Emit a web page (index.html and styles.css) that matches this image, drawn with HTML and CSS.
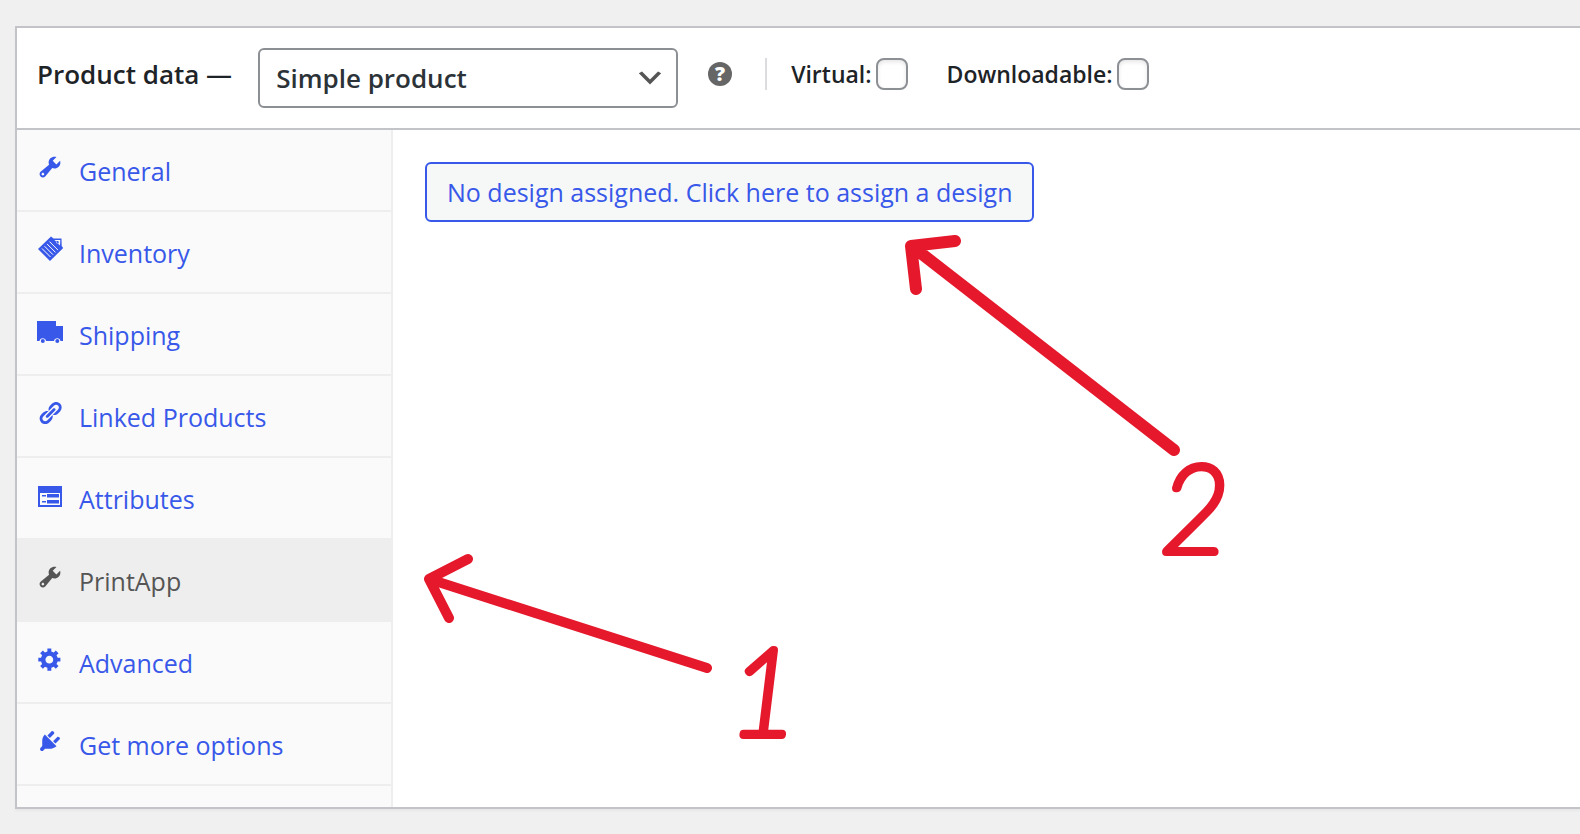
FILE: index.html
```html
<!DOCTYPE html>
<html lang="en">
<head>
<meta charset="utf-8">
<title>Product data</title>
<link rel="stylesheet" href="styles.css">
</head>
<body>
<section class="panel">
  <header class="panel-header">
    <h2 class="panel-title"><label for="product-type">Product data —</label></h2>
    <div class="select-wrap">
      <select class="type-select" id="product-type">
        <option>Simple product</option>
        <option>Grouped product</option>
        <option>Variable product</option>
      </select>
      <svg class="select-arrow" viewBox="0 0 20 20" aria-hidden="true"><path d="M5 6l5 5 5-5 2 1-7 7-7-7 2-1z"/></svg>
    </div>
    <div class="type-options">
      <button class="help" type="button" aria-label="Help">?</button>
      <span class="divider"></span>
      <label class="check" for="virtual">Virtual: <input class="check-box" type="checkbox" id="virtual"></label>
      <label class="check" for="downloadable">Downloadable: <input class="check-box" type="checkbox" id="downloadable"></label>
    </div>
  </header>
  <div class="panel-body">
    <nav class="tabs">
      <a class="tab" href="#general"><svg class="icon" viewBox="0 0 20 20"><path d="M16.68 9.77c-1.34 1.34-3.3 1.67-4.95.99l-5.41 6.52c-.99.99-2.59.99-3.58 0s-.99-2.59 0-3.57l6.52-5.42c-.68-1.65-.35-3.61.99-4.95 1.28-1.28 3.12-1.62 4.72-1.06l-2.89 2.89 2.82 2.82 2.86-2.87c.53 1.58.18 3.39-1.08 4.65zM3.81 16.21c.4.39 1.04.39 1.43 0 .4-.4.4-1.04 0-1.43-.39-.4-1.03-.4-1.43 0-.39.39-.39 1.03 0 1.43z"/></svg>General</a>
      <a class="tab" href="#inventory"><svg class="icon" viewBox="0 0 26 26"><path fill-rule="evenodd" d="M1 13L14 .5l2.500 1.900 8 .1.200 7.500 1.500 2L13 25zM17.500 3.900l5.500 5.500.3-5.500zM20.500 5a1.300 1.300 0 1 1 0 2.600 1.300 1.300 0 0 1 0-2.600z"/><path class="icon-cut" d="M5 12.500l8.500 8.500M7.500 10.200l8.500 8.500M10 7.900l8.500 8.500M12.500 5.600l8.500 8.500"/></svg>Inventory</a>
      <a class="tab" href="#shipping"><svg class="icon" viewBox="0 0 26 26"><path d="M0 3h19v5h7v15h-2.500a3.300 3.300 0 0 0-6.500 0H9a3.300 3.300 0 0 0-6.500 0H0z"/><circle cx="5.800" cy="23" r="2"/><circle cx="20.300" cy="23" r="2"/></svg>Shipping</a>
      <a class="tab" href="#linked"><svg class="icon" viewBox="0 0 20 20"><path d="M17.740 2.760c1.680 1.690 1.680 4.410 0 6.100l-1.530 1.520c-1.120 1.120-2.700 1.470-4.140 1.090l2.620-2.610.76-.77.76-.76c.84-.84.84-2.200 0-3.040-.84-.85-2.200-.85-3.040 0l-.77.76-3.380 3.380c-.37-1.440-.02-3.020 1.100-4.140l1.520-1.530c1.690-1.680 4.420-1.680 6.100 0zM8.590 13.430l5.340-5.340c.42-.42.42-1.100 0-1.520-.44-.43-1.130-.39-1.530 0l-5.330 5.340c-.42.42-.42 1.100 0 1.520.44.43 1.130.39 1.520 0zm-.76 2.290l4.140-4.150c.38 1.440.03 3.020-1.090 4.140l-1.520 1.530c-1.690 1.680-4.410 1.680-6.100 0-1.680-1.680-1.680-4.420 0-6.100l1.530-1.520c1.120-1.120 2.700-1.470 4.140-1.100l-4.140 4.150c-.85.84-.85 2.200 0 3.050.84.84 2.200.84 3.040 0z"/></svg>Linked Products</a>
      <a class="tab" href="#attributes"><svg class="icon" viewBox="0 0 26 26"><path fill-rule="evenodd" d="M1 4h24v21H1zM3 11v12h20V11z"/><path d="M10 12h12v3.500H10zM10 18h12v3.500H10zM5 13h4v1.500H5zM5 19h4v1.500H5z"/></svg>Attributes</a>
      <a class="tab tab-active" href="#printapp" aria-current="page"><svg class="icon" viewBox="0 0 20 20"><path d="M16.68 9.77c-1.34 1.34-3.3 1.67-4.95.99l-5.41 6.52c-.99.99-2.59.99-3.58 0s-.99-2.59 0-3.57l6.52-5.42c-.68-1.65-.35-3.61.99-4.95 1.28-1.28 3.12-1.62 4.72-1.06l-2.89 2.89 2.82 2.82 2.86-2.87c.53 1.58.18 3.39-1.08 4.65zM3.81 16.21c.4.39 1.04.39 1.43 0 .4-.4.4-1.04 0-1.43-.39-.4-1.03-.4-1.43 0-.39.39-.39 1.03 0 1.43z"/></svg>PrintApp</a>
      <a class="tab" href="#advanced"><svg class="icon" viewBox="0 0 20 20"><path d="M18 12h-2.180c-.17.7-.44 1.350-.81 1.930l1.540 1.540-2.100 2.100-1.540-1.540c-.58.36-1.230.63-1.910.79V19H8v-2.180c-.68-.16-1.330-.43-1.910-.79l-1.540 1.540-2.120-2.120 1.540-1.540c-.36-.58-.63-1.230-.79-1.910H1V9.030h2.170c.16-.7.44-1.350.8-1.940L2.430 5.550l2.100-2.100 1.540 1.540c.58-.37 1.240-.64 1.930-.81V2h3v2.180c.68.16 1.330.43 1.910.79l1.540-1.540 2.120 2.120-1.540 1.540c.36.59.64 1.240.8 1.940H18V12zm-8.500 1.500c1.660 0 3-1.340 3-3s-1.340-3-3-3-3 1.340-3 3 1.340 3 3 3z"/></svg>Advanced</a>
      <a class="tab" href="#more"><svg class="icon" viewBox="0 0 20 20"><path d="M13.110 4.360L9.870 7.600 8 5.730l3.240-3.240c.35-.34 1.050-.2 1.560.32.52.51.66 1.210.31 1.550zm-8 1.770l.91-1.120 9.010 9.010-1.190.84c-.71.71-2.630 1.160-3.820 1.160H6.140L4.900 17.260c-.59.59-1.540.59-2.120 0-.59-.58-.59-1.530 0-2.120l1.240-1.240v-3.880c0-1.130.4-3.190 1.090-3.890zm7.260 3.970l3.240-3.240c.34-.35 1.040-.21 1.550.31.52.51.66 1.210.31 1.550l-3.240 3.250z"/></svg>Get more options</a>
    </nav>
    <div class="content">
      <button class="assign" type="button">No design assigned. Click here to assign a design</button>
      <!-- Marker notes laid over the content area -->
      <svg class="notes" width="860" height="640">
        <path class="ink ink-step-one" d="M314 538L36 449M75 429L36 449L56 488"/>
        <path class="ink ink-step-two" d="M781 320L520 117M562 111L518 116L523 159"/>
        <text class="note-number" x="336" y="605">1</text>
        <text class="note-number" x="767" y="422">2</text>
      </svg>
    </div>
  </div>
</section>
</body>
</html>
```

FILE: styles.css
```css
* {
  box-sizing: border-box;
}

body {
  margin: 0;
  padding: 26px 0 25px 15px;
  background: #f0f0f1;
  color: #1d2327;
  font-family: "Open Sans", "Noto Sans", sans-serif;
  font-size: 25px;
}

.panel {
  background: #fff;
  border: 2px solid #c3c4c7;
  border-right: 0;
  box-shadow: 0 2px 2px rgba(0, 0, 0, 0.04);
}

.panel-header {
  display: flex;
  align-items: flex-start;
  padding: 20px;
  border-bottom: 2px solid #c3c4c7;
}

.panel-title {
  margin: 0;
  font-size: 26px;
  font-weight: 600;
  line-height: 52px;
}

.select-wrap {
  position: relative;
  width: 420px;
  margin-left: 26px;
}

.type-select {
  display: block;
  width: 100%;
  height: 60px;
  padding: 0 50px 0 16px;
  appearance: none;
  background: #fff;
  border: 2px solid #8c8f94;
  border-radius: 6px;
  color: #2c3338;
  font: 600 26px "Open Sans", "Noto Sans", sans-serif;
}

.select-arrow {
  position: absolute;
  top: 14px;
  right: 12px;
  width: 32px;
  height: 32px;
  fill: #555;
  pointer-events: none;
}

.type-options {
  display: flex;
  align-items: center;
  height: 52px;
  margin-left: 30px;
}

.help {
  width: 24px;
  height: 24px;
  padding: 0;
  background: #666;
  border: 0;
  border-radius: 50%;
  color: #fff;
  font: 800 20px/24px "Open Sans", sans-serif;
}

.divider {
  width: 2px;
  height: 32px;
  margin: 0 24px 0 33px;
  background: #dcdcde;
}

.check {
  display: flex;
  align-items: center;
  gap: 4px;
  margin-right: 39px;
  font-size: 23px;
  font-weight: 600;
}

.check-box {
  width: 32px;
  height: 32px;
  margin: 0;
  appearance: none;
  background: #fff;
  border: 2px solid #8c8f94;
  border-radius: 8px;
  box-shadow: inset 0 2px 4px rgba(0, 0, 0, 0.1);
}

.panel-body {
  display: flex;
}

.tabs {
  flex: 0 0 376px;
  padding-bottom: 21px;
  background: #fafafa;
  border-right: 2px solid #eee;
}

.tab {
  display: flex;
  align-items: flex-start;
  gap: 16px;
  height: 82px;
  padding: 24px 20px 0;
  border-bottom: 2px solid #eee;
  color: #3858e9;
  line-height: 34px;
  text-decoration: none;
}

.tab-active {
  background: #eee;
  color: #555;
}

.icon {
  flex: none;
  width: 26px;
  height: 26px;
  fill: currentColor;
}

.icon-cut {
  fill: none;
  stroke: #fafafa;
}

.content {
  position: relative;
  flex: 1;
  min-width: 0;
  padding: 32px;
}

.assign {
  height: 60px;
  padding: 0 20px;
  background: #f6f7f7;
  border: 2px solid #3858e9;
  border-radius: 6px;
  color: #3858e9;
  font: 25px "Open Sans", "Noto Sans", sans-serif;
}

.notes {
  position: absolute;
  top: 0;
  left: 0;
  pointer-events: none;
}

.ink {
  fill: none;
  stroke: #e5182c;
  stroke-linecap: round;
  stroke-linejoin: round;
}

.ink-step-one {
  stroke-width: 10px;
}

.ink-step-two {
  stroke-width: 12px;
}

.note-number {
  fill: #e5182c;
  stroke: #e5182c;
  stroke-width: 8px;
  stroke-linejoin: round;
  font: italic 100 120px Lato, sans-serif;
}
```
